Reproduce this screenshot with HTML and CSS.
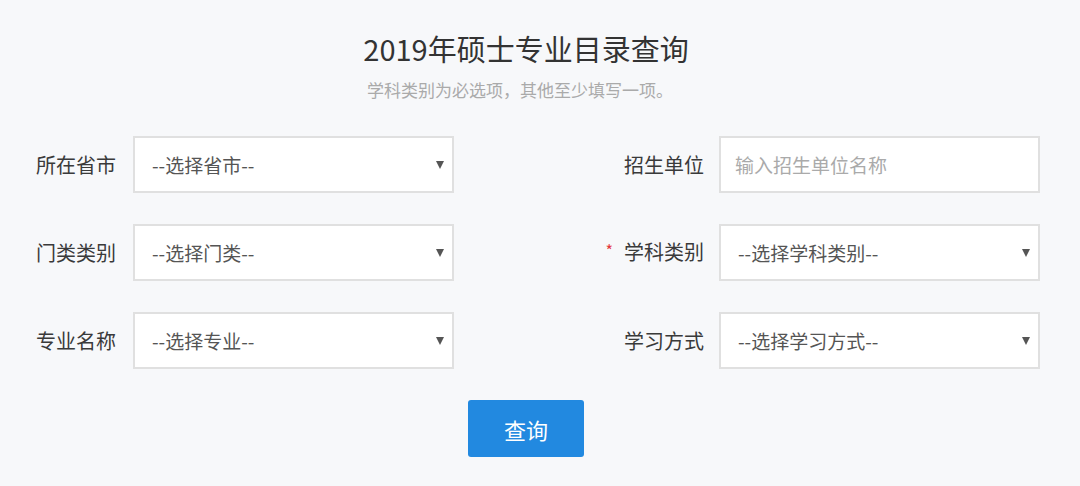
FILE: index.html
```html
<!DOCTYPE html>
<html lang="zh-CN">
<head>
  <meta charset="UTF-8">
  <title>2019年硕士专业目录查询</title>
  <link rel="stylesheet" href="styles.css">
</head>
<body>
  <div class="page">
    <h1 class="title">2019年硕士专业目录查询</h1>
    <p class="subtitle">学科类别为必选项，其他至少填写一项。</p>

    <!-- 查询表单 -->
    <form class="query-form" onsubmit="return false;">
      <div class="field">
        <label class="field-label">所在省市</label>
        <div class="select-box">
          <select class="control"><option>--选择省市--</option></select>
        </div>
      </div>
      <div class="field field-right">
        <label class="field-label">招生单位</label>
        <input class="control text-input" type="text" placeholder="输入招生单位名称">
      </div>

      <div class="field">
        <label class="field-label">门类类别</label>
        <div class="select-box">
          <select class="control"><option>--选择门类--</option></select>
        </div>
      </div>
      <div class="field field-right">
        <label class="field-label"><span class="required">*</span>学科类别</label>
        <div class="select-box">
          <select class="control"><option>--选择学科类别--</option></select>
        </div>
      </div>

      <div class="field">
        <label class="field-label">专业名称</label>
        <div class="select-box">
          <select class="control"><option>--选择专业--</option></select>
        </div>
      </div>
      <div class="field field-right">
        <label class="field-label">学习方式</label>
        <div class="select-box">
          <select class="control"><option>--选择学习方式--</option></select>
        </div>
      </div>

      <div class="actions">
        <button type="submit" class="btn-query">查询</button>
      </div>
    </form>
  </div>
</body>
</html>
```

FILE: styles.css
```css
body {
  margin: 0;
  background-color: #f7f8fa;
  font-family: "Noto Sans CJK SC", "Open Sans", sans-serif;
  color: #333;
}
.page {
  padding: 28px 40px 0 36px;
}
.title {
  margin: 0;
  padding-right: 24px;
  text-align: center;
  font-size: 29px;
  font-weight: normal;
  line-height: 40px;
  color: #333;
}
.subtitle {
  margin: 12px 0 0;
  padding-right: 36px;
  text-align: center;
  font-size: 17px;
  line-height: 20px;
  color: #aaa;
}
.query-form {
  margin-top: 36px;
  display: grid;
  grid-template-columns: 418px 1fr;
  row-gap: 31px;
}
.field {
  display: flex;
  align-items: center;
}
.field-right {
  justify-content: flex-end;
}
.field-label {
  width: 97px;
  font-size: 20px;
  line-height: 28px;
  color: #3a3a3a;
  white-space: nowrap;
}
.field-right .field-label {
  width: auto;
  margin-right: 15px;
  text-align: right;
}
.required {
  color: #e4393c;
  font-size: 16px;
  margin-right: 11px;
  position: relative;
  top: -3px;
}
.select-box {
  position: relative;
  width: 321px;
}
.select-box::after {
  content: "";
  position: absolute;
  right: 10px;
  top: 25px;
  border-left: 4px solid transparent;
  border-right: 4px solid transparent;
  border-top: 8px solid #555;
  pointer-events: none;
}
.control {
  box-sizing: border-box;
  width: 321px;
  height: 57px;
  padding: 0 17px;
  border: 2px solid #e0e0e0;
  border-radius: 0;
  background-color: #fff;
  font-family: inherit;
  font-size: 19px;
  color: #555;
  outline: none;
}
select.control {
  appearance: none;
  -webkit-appearance: none;
}
.text-input {
  padding: 0 14px;
}
.text-input::placeholder {
  color: #aaa;
}
.actions {
  grid-column: 1 / 3;
  display: flex;
  justify-content: center;
  padding-right: 24px;
}
.btn-query {
  width: 116px;
  height: 57px;
  background-color: #2289e0;
  color: #fff;
  font-family: inherit;
  font-size: 22px;
  border: none;
  border-radius: 3px;
  cursor: pointer;
}
```
